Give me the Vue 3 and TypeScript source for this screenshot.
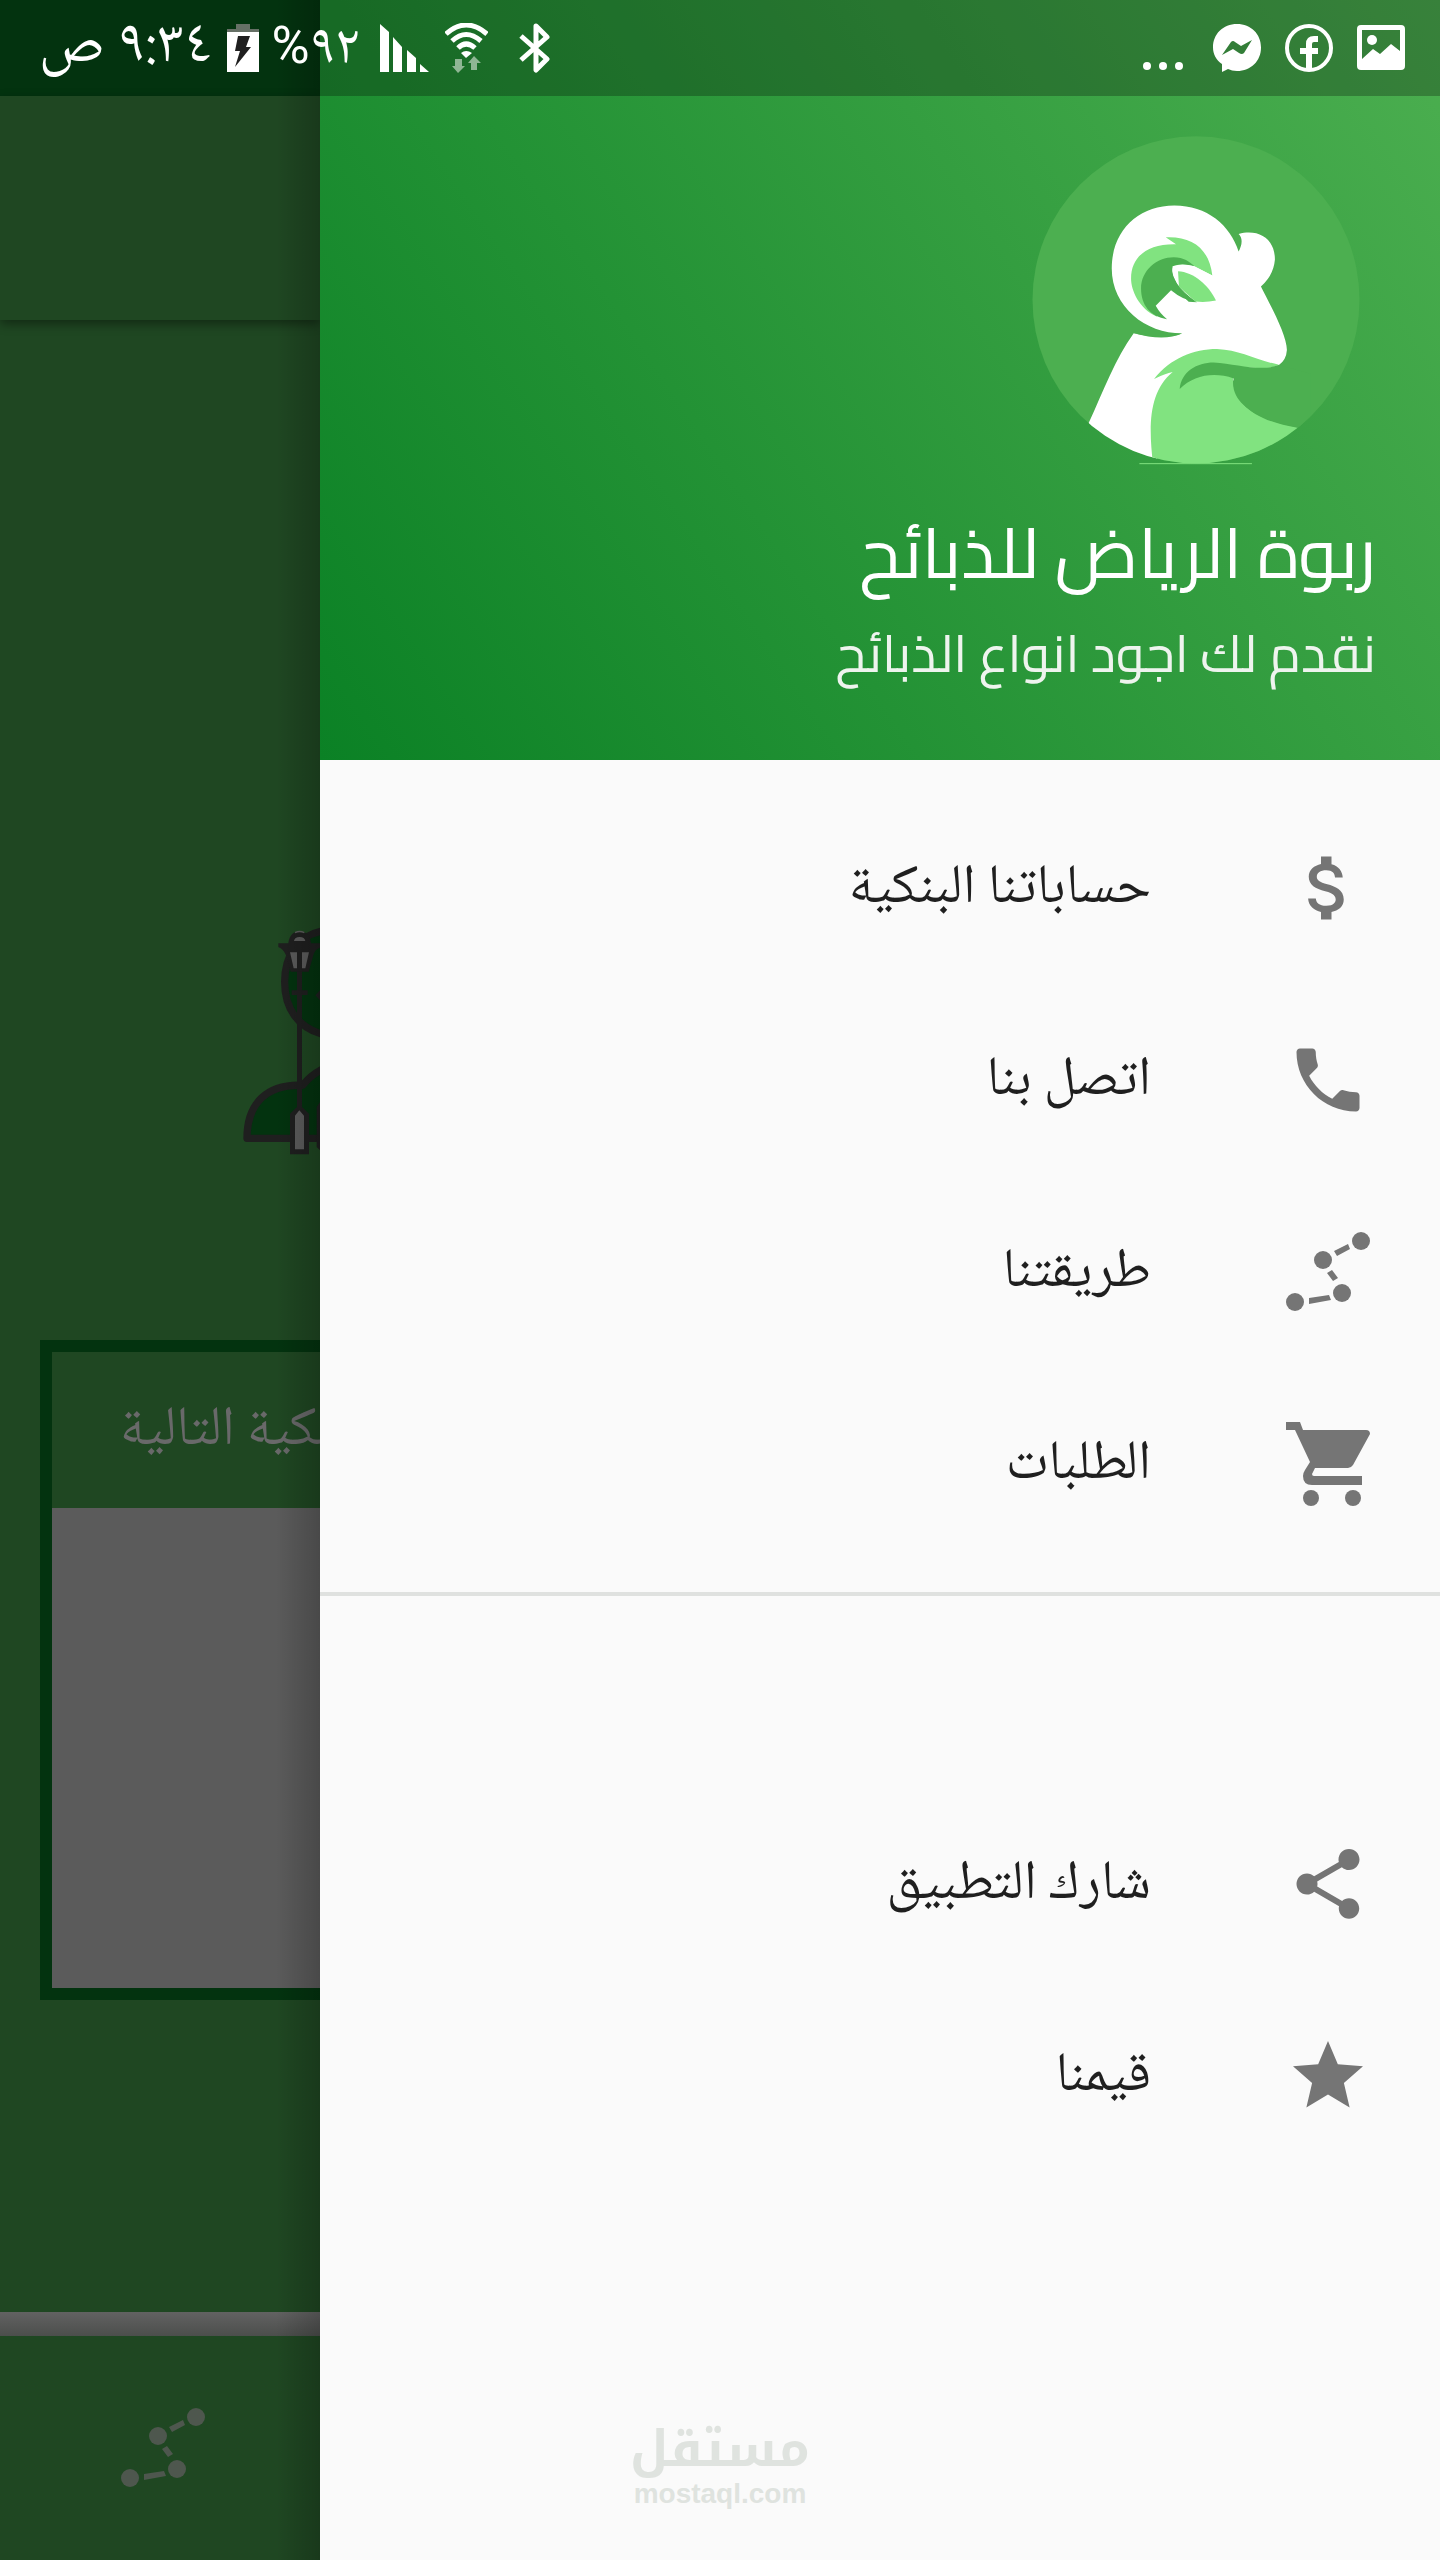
<script setup lang="ts">
interface MenuItem {
  id: string
  label: string
}

const mainItems: MenuItem[] = [
  { id: 'accounts', label: 'حساباتنا البنكية' },
  { id: 'call', label: 'اتصل بنا' },
  { id: 'route', label: 'طريقتنا' },
  { id: 'orders', label: 'الطلبات' },
]

const extraItems: MenuItem[] = [
  { id: 'share', label: 'شارك التطبيق' },
  { id: 'values', label: 'قيمنا' },
]

const groups: MenuItem[][] = [mainItems, extraItems]

const materialPaths: Record<string, string> = {
  accounts:
    'M11.8 10.9c-2.27-.59-3-1.2-3-2.15 0-1.09 1.01-1.85 2.7-1.85 1.78 0 2.44.85 2.5 2.1h2.21c-.07-1.72-1.12-3.3-3.21-3.81V3h-3v2.16c-1.94.42-3.5 1.68-3.5 3.61 0 2.31 1.91 3.46 4.7 4.13 2.5.6 3 1.48 3 2.41 0 .69-.49 1.79-2.7 1.79-2.06 0-2.87-.92-2.98-2.1h-2.2c.12 2.19 1.76 3.42 3.68 3.83V21h3v-2.15c1.95-.37 3.5-1.5 3.5-3.55 0-2.84-2.43-3.81-4.7-4.4z',
  call:
    'M20 15.5c-1.25 0-2.45-.2-3.57-.57-.35-.11-.74-.03-1.02.24l-2.2 2.2c-2.83-1.44-5.15-3.75-6.59-6.59l2.2-2.21c.28-.26.36-.65.25-1C8.7 6.45 8.5 5.25 8.5 4c0-.55-.45-1-1-1H4c-.55 0-1 .45-1 1 0 9.39 7.61 17 17 17 .55 0 1-.45 1-1v-3.500c0-.55-.45-1-1-1z',
  share:
    'M18 16.080c-.76 0-1.44.3-1.960.77L8.910 12.700c.05-.23.09-.46.09-.7s-.04-.47-.09-.7l7.050-4.110c.54.5 1.250.81 2.040.81 1.660 0 3-1.340 3-3s-1.340-3-3-3-3 1.340-3 3c0 .24.040.47.090.7L8.040 9.810C7.500 9.310 6.790 9 6 9c-1.660 0-3 1.340-3 3s1.340 3 3 3c.79 0 1.500-.31 2.040-.81l7.120 4.160c-.05.21-.08.43-.08.65 0 1.610 1.310 2.920 2.920 2.920s2.920-1.310 2.920-2.920-1.310-2.920-2.920-2.920z',
  values:
    'M12 17.270L18.180 21l-1.640-7.030L22 9.240l-7.190-.61L12 2 9.190 8.630 2 9.240l5.460 4.730L5.820 21z',
}
</script>

<template>
  <div class="screen">
    <header class="status" dir="ltr">
      <div class="status-side">
        <span class="clock" dir="rtl">٩:٣٤ ص</span>
        <svg class="battery" viewBox="0 0 32 48" aria-hidden="true">
          <path fill="#667066" d="M9 0H23V5H32V9H0V5H9Z" />
          <path fill="#fff" d="M0 8H32V48H0Z" />
          <path fill="#1f1f1f" d="M11 12H23L19 23H24L8 43L13 27H8Z" />
        </svg>
        <span class="percent" dir="rtl">٩٢<span class="percent-sign">%</span></span>
        <svg class="signal" viewBox="0 0 49 48" aria-hidden="true">
          <path fill="#fff" d="M0 0L9 8V48H0ZM13 13L22 23V48H13ZM27 26L36 34V48H27ZM40 40L49 48H40Z" />
        </svg>
        <svg class="wifi" viewBox="0 0 43 50" aria-hidden="true">
          <g fill="none" stroke="#fff" stroke-width="5">
            <path d="M1 11Q21 -7 42 11" />
            <path d="M7 18Q21 5 36 18" />
            <path d="M13 25Q21 17 30 25" />
          </g>
          <path fill="#fff" d="M16 30Q21 26 27 30L21 35Z" />
          <path fill="#8fb694" d="M10 36H17V43H20L13 50L7 43H10ZM26 47V40H23L29 33L36 40H32V47Z" />
        </svg>
        <svg class="bluetooth" viewBox="0 0 32 50" aria-hidden="true">
          <path fill="none" stroke="#fff" stroke-width="5" stroke-linejoin="round" d="M2 13L28 36L17 47V3L28 14L2 37" />
        </svg>
      </div>
      <div class="status-side notices">
        <svg class="dots" viewBox="0 0 40 48" aria-hidden="true">
          <g fill="#fff"><circle cx="4" cy="42" r="4" /><circle cx="20" cy="42" r="4" /><circle cx="36" cy="42" r="4" /></g>
        </svg>
        <svg class="notice" viewBox="0 0 48 48" aria-hidden="true">
          <path fill="#fff" d="M24 0C38 0 48 10 48 23.500C48 37 38 47 24 47C20 47 18 46 15 45L9 48V40C3 36 0 30 0 23.500C0 10 10 0 24 0Z" />
          <path fill="#337e38" d="M9 31L18 18Q20 16 22 18L28 22L39 16L31 29Q29 31 26 29L20 25Z" />
        </svg>
        <svg class="notice" viewBox="0 0 48 48" aria-hidden="true">
          <circle cx="24" cy="24" r="22" fill="none" stroke="#fff" stroke-width="4" />
          <path fill="none" stroke="#fff" stroke-width="6" d="M24 46V20Q24 15 29 15H33M15 27H33" />
        </svg>
        <svg class="notice" viewBox="0 0 48 48" aria-hidden="true">
          <path fill="#fff" fill-rule="evenodd" d="M4 1H44Q48 1 48 5V42Q48 46 44 46H4Q0 46 0 42V5Q0 1 4 1ZM5 6V35L16 25L23 30L34 20L43 27V6Z" />
          <circle cx="15" cy="16" r="5" fill="#fff" />
        </svg>
      </div>
    </header>

    <main class="page" dir="ltr">
      <div class="status-base"></div>
      <div class="app-bar"></div>
      <div class="page-body">
        <svg class="scene" viewBox="120 80 240 690" aria-hidden="true">
          <g fill="#03330f" stroke="#1f1f1f" stroke-width="22">
            <path d="M380 90C290 100 254 170 254 245C254 320 290 385 380 405" />
            <path d="M380 500Q335 520 308 555C200 550 141 610 141 714H380" stroke-linejoin="round" />
          </g>
          <path fill="#1f1f1f" d="M291 200H306V620L327 640V762H270V640L291 620Z" />
          <path fill="#1f1f1f" d="M275 270H323V284H275ZM346 285L360 270V300ZM350 620L360 605V750L350 740Z" />
          <path fill="#1f1f1f" d="M235 129H265C268 103 282 93 299 93C316 93 330 103 333 129H360V142Q345 146 340 165L326 214H272L258 165Q250 145 235 140Z" />
          <path fill="#5c5c5c" d="M282 122Q284 110 299 110Q314 110 316 122ZM270 156H291V204H281ZM306 156H327L316 204H306ZM285 646L298 630L312 646V747H285Z" />
          <path fill="none" stroke="#5c5c5c" stroke-width="4" d="M285 97Q299 90 313 97" />
        </svg>
        <section class="card">
          <h2 class="card-title" dir="rtl">البنكية التالية</h2>
          <div class="card-body"></div>
        </section>
      </div>
      <div class="nav-gap"></div>
      <footer class="bottom-nav">
        <svg class="icon" viewBox="0 0 84 84" aria-hidden="true">
          <g fill="#4e574e">
            <circle cx="9" cy="72" r="9" /><circle cx="56" cy="63" r="9" /><circle cx="37" cy="30" r="9" /><circle cx="75" cy="11" r="9" />
            <path d="M23 68L43 65L45 70L23 74ZM41 43L46 40L52 48L47 51ZM48 21L62 14L64 19L51 26Z" />
          </g>
        </svg>
      </footer>
    </main>

    <aside class="drawer" dir="rtl">
      <div class="hero">
        <svg class="avatar" viewBox="65 47 984 988" aria-hidden="true">
          <defs>
            <clipPath id="disc"><circle cx="557" cy="539" r="491" /></clipPath>
          </defs>
          <circle cx="557" cy="539" r="491" fill="#4caf50" />
          <path stroke="#81e380" stroke-width="3" d="M387 1031H725" />
          <g clip-path="url(#disc)">
            <path fill="#fff" d="M235 908C280 810 315 715 370 639Q460 660 515 640C405 640 304 560 304 445C304 330 385 256 492 256C590 256 660 315 685 394Q703 358 685 341C745 325 794 355 794 418Q790 465 752 499C780 555 830 645 830 690Q828 720 806 735L690 780L500 800L428 1060H200Z" />
            <path fill="#81e380" d="M431 777C480 715 550 687 620 687C690 690 730 718 806 734C780 750 730 744 700 741L668 775C668 850 740 905 862 923V1050H430C415 930 410 820 487 756Q465 760 431 777Z" />
            <path fill="#4caf50" d="M508 807C512 755 560 727 610 727C680 732 750 755 806 735L900 760V928C760 910 655 855 670 775C610 755 550 765 508 807Z" />
            <path fill="#4caf50" d="M370 639Q450 640 515 640Q460 664 370 639Z" />
            <path fill="#81e380" d="M466 351C545 347 597 385 606 466L545 435C430 440 400 500 440 590C385 565 362 510 362 475C362 410 410 370 497 372Z" />
            <path fill="#4caf50" d="M470 597C420 590 392 555 392 505C392 450 440 411 490 411C520 411 538 425 552 438Q510 428 487 438C480 475 520 520 560 545Q520 542 482 510L436 557Q450 582 470 597Z" />
            <path fill="#fff" d="M487 438Q515 428 552 438L606 466L640 560L560 545Q478 490 487 438Z" />
            <path fill="#4caf50" d="M490 470Q500 525 560 546L535 545L510 520Z" />
            <path fill="#81e380" d="M503 453C550 455 595 495 617 541Q585 548 555 544L506 500Z" />
          </g>
        </svg>
        <h1 class="title">ربوة الرياض للذبائح</h1>
        <p class="subtitle">نقدم لك اجود انواع الذبائح</p>
      </div>

      <nav class="menu">
        <ul v-for="(group, index) in groups" :key="index" class="group">
          <li v-for="item in group" :key="item.id">
            <a class="item" :href="'#' + item.id">
              <svg v-if="item.id === 'route'" class="icon" viewBox="0 0 84 84" aria-hidden="true">
                <circle cx="9" cy="72" r="9" /><circle cx="56" cy="63" r="9" /><circle cx="37" cy="30" r="9" /><circle cx="75" cy="11" r="9" />
                <path d="M23 68L43 65L45 70L23 74ZM41 43L46 40L52 48L47 51ZM48 21L62 14L64 19L51 26Z" />
              </svg>
              <svg v-else-if="item.id === 'orders'" class="icon" viewBox="0 0 84 84" aria-hidden="true">
                <path d="M0 0H14L17 8H80Q84 8 84 12L67 43Q65 46 62 46H29L26 52Q26 54 28 54H76V63H26Q17 63 17 54Q17 51 19 48L24 40L9 8H0Z" />
                <circle cx="25" cy="76" r="8" /><circle cx="67" cy="76" r="8" />
              </svg>
              <svg v-else class="icon" viewBox="0 0 24 24" aria-hidden="true">
                <path :d="materialPaths[item.id]" />
              </svg>
              <span class="item-label">{{ item.label }}</span>
            </a>
          </li>
        </ul>
      </nav>
    </aside>

    <div class="watermark">
      <strong>مستقل</strong>
      <span dir="ltr">mostaql.com</span>
    </div>
  </div>
</template>

<style>
body {
  margin: 0;
}
</style>

<style scoped>
.screen {
  position: relative;
  display: grid;
  grid-template-columns: 2fr 7fr;
  min-height: 100vh;
  overflow: hidden;
  background: #fafafa;
  font-family: "Noto Naskh Arabic", "Noto Sans Arabic", "DejaVu Sans", sans-serif;
}

.status {
  position: absolute;
  top: 0;
  left: 0;
  right: 0;
  z-index: 2;
  height: 96px;
  box-sizing: border-box;
  padding: 0 35px 0 39px;
  display: flex;
  align-items: center;
  justify-content: space-between;
  color: #fff;
}

.status-side {
  display: flex;
  align-items: center;
}

.notices {
  gap: 24px;
}

.clock,
.percent {
  font-size: 56px;
  line-height: 88px;
  white-space: nowrap;
}

.clock {
  width: 172px;
  font-size: 60px;
}

.percent {
  width: 86px;
}

.percent-sign {
  font-family: Roboto, sans-serif;
  font-size: 52px;
}

.battery {
  width: 32px;
  height: 48px;
  margin: 0 15px 0 16px;
}

.signal {
  width: 49px;
  height: 48px;
  margin-left: 20px;
}

.wifi {
  width: 43px;
  height: 50px;
  margin-left: 16px;
}

.bluetooth {
  width: 32px;
  height: 50px;
  margin-left: 31px;
}

.dots {
  width: 40px;
  height: 48px;
  margin-right: 6px;
}

.notice {
  width: 48px;
  height: 48px;
}

.page {
  position: relative;
  display: flex;
  flex-direction: column;
  min-width: 0;
  overflow: hidden;
  background: #1f4722;
}

.page::after {
  content: "";
  position: absolute;
  top: 0;
  bottom: 0;
  right: 0;
  width: 44px;
  background: linear-gradient(to right, transparent, rgba(0, 0, 0, 0.2));
}

.status-base {
  height: 96px;
  background: #03330f;
}

.app-bar {
  height: 224px;
  background: #1f4722;
  box-shadow: 0 4px 10px rgba(0, 0, 0, 0.4);
}

.page-body {
  flex: 1;
  display: flex;
  flex-direction: column;
  padding: 607px 0 0 40px;
}

.scene {
  align-self: flex-end;
  width: 80px;
  height: 230px;
}

.card {
  margin-top: 183px;
  border: 12px solid #03330f;
  border-right: 0;
}

.card-title {
  height: 156px;
  margin: 0;
  padding-left: 68px;
  direction: ltr;
  overflow: hidden;
  color: #69696a;
  font-size: 55px;
  font-weight: 400;
  line-height: 160px;
  white-space: nowrap;
}

.card-body {
  height: 480px;
  background: #5b5b5b;
}

.nav-gap {
  height: 24px;
  background: linear-gradient(#626262, #4c4e4c);
}

.bottom-nav {
  height: 224px;
  padding-left: 6px;
  display: flex;
  align-items: center;
  justify-content: center;
}

.drawer {
  min-width: 0;
  background: #fafafa;
}

.hero {
  position: relative;
  height: 760px;
  box-sizing: border-box;
  padding: 136px 64px 0 0;
  background: linear-gradient(56deg, #0b8125, #4caf50);
}

.hero::before {
  content: "";
  position: absolute;
  inset: 0 0 auto;
  height: 96px;
  background: rgba(0, 0, 0, 0.26);
}

.avatar {
  display: block;
  width: 328px;
  height: 329px;
  margin-right: 16px;
}

.title,
.subtitle {
  margin: 0;
  font-family: Cairo, "Noto Kufi Arabic", "Noto Sans Arabic", "Noto Naskh Arabic", sans-serif;
  font-weight: 400;
  white-space: nowrap;
}

.title {
  margin-top: 36px;
  color: #fff;
  font-size: 70px;
  line-height: 104px;
}

.subtitle {
  color: #eef4ee;
  font-size: 52px;
  line-height: 96px;
}

.group {
  margin: 0;
  padding: 32px 0;
  list-style: none;
}

.group + .group {
  padding-top: 192px;
  border-top: 4px solid #dfe1df;
}

.item {
  height: 192px;
  display: flex;
  align-items: center;
  gap: 135px;
  padding-right: 70px;
  color: #1f1f1f;
  font-size: 55px;
  line-height: 72px;
  text-decoration: none;
  white-space: nowrap;
}

.item-label {
  padding-top: 4px;
}

.icon {
  flex: none;
  width: 84px;
  height: 84px;
  fill: #757575;
}

.watermark {
  position: absolute;
  left: 50%;
  bottom: 50px;
  transform: translateX(-50%);
  display: flex;
  flex-direction: column;
  align-items: center;
  color: #dfe3df;
}

.watermark strong {
  font-family: "Noto Kufi Arabic", "Noto Sans Arabic", "Noto Naskh Arabic", sans-serif;
  font-size: 50px;
  line-height: 56px;
}

.watermark span {
  font: bold 28px/32px "Liberation Sans", sans-serif;
}
</style>
